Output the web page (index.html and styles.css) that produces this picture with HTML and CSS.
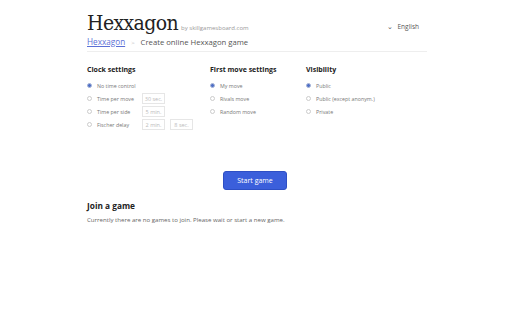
FILE: index.html
```html
<!DOCTYPE html>
<html lang="en">
<head>
    <meta charset="UTF-8">
    <title>Hexxagon</title>
    <link rel="stylesheet" href="styles.css">
</head>
<body>
    <div class="page">
        <div class="header">
            <div class="brand">
                <span class="logo">Hexxagon</span>
                <span class="by">by skillgamesboard.com</span>
            </div>
            <div class="lang"><span class="chev">&#8964;</span> English</div>
        </div>
        <div class="crumbs">
            <a href="#">Hexxagon</a>
            <span class="sep">&gt;</span>
            <span>Create online Hexxagon game</span>
        </div>

        <div class="settings">
            <div class="group clock">
                <h3>Clock settings</h3>
                <label class="opt"><span class="radio on"></span>No time control</label>
                <label class="opt"><span class="radio"></span><span class="lbl">Time per move</span><span class="box">30 sec.</span></label>
                <label class="opt"><span class="radio"></span><span class="lbl">Time per side</span><span class="box">5 min.</span></label>
                <label class="opt"><span class="radio"></span><span class="lbl">Fischer delay</span><span class="box">2 min.</span><span class="box">8 sec.</span></label>
            </div>
            <div class="group first">
                <h3>First move settings</h3>
                <label class="opt"><span class="radio on"></span>My move</label>
                <label class="opt"><span class="radio"></span>Rivals move</label>
                <label class="opt"><span class="radio"></span>Random move</label>
            </div>
            <div class="group">
                <h3>Visibility</h3>
                <label class="opt"><span class="radio on"></span>Public</label>
                <label class="opt"><span class="radio"></span>Public (except anonym.)</label>
                <label class="opt"><span class="radio"></span>Private</label>
            </div>
        </div>

        <div class="actions">
            <button class="start">Start game</button>
        </div>

        <h2>Join a game</h2>
        <p class="note">Currently there are no games to join. Please wait or start a new game.</p>
    </div>
</body>
</html>
```

FILE: styles.css
```css
body {
    margin: 0;
    background: #fff;
    font-family: 'Open Sans', sans-serif;
    color: #333;
}

.page {
    width: 340px;
    margin: 0 0 0 87px;
    padding-top: 11px;
}

.header {
    display: flex;
    justify-content: space-between;
    align-items: flex-end;
    height: 25px;
}

.brand {
    display: flex;
    align-items: baseline;
}

.logo {
    font-family: 'DejaVu Serif Condensed', 'DejaVu Serif', serif;
    font-stretch: condensed;
    font-size: 21px;
    line-height: 26px;
    color: #222;
    letter-spacing: -0.6px;
}

.by {
    font-size: 6px;
    color: #999;
    margin-left: 3px;
}

.lang {
    font-size: 6.5px;
    color: #555;
    margin-bottom: 5px;
    margin-right: 8px;
}

.chev {
    font-size: 7px;
    margin-right: 3px;
}

.crumbs {
    font-size: 7.7px;
    line-height: 12px;
    color: #555;
    padding: 0 0 2px;
    border-bottom: 1px solid #eee;
}

.crumbs a {
    color: #5b6fd6;
    font-size: 8.2px;
}

.sep {
    color: #bbb;
    font-size: 6px;
    margin: 0 4px;
}

.settings {
    display: flex;
    margin-top: 13px;
}

.group h3 {
    font-size: 7px;
    line-height: 10px;
    font-weight: 700;
    color: #222;
    margin: 0 0 4px;
}

.clock {
    width: 123px;
}

.first {
    width: 96px;
}

.opt {
    display: flex;
    align-items: center;
    height: 13px;
    font-size: 5.3px;
    color: #777;
}

.radio {
    width: 5px;
    height: 5px;
    border-radius: 50%;
    border: 1px solid #ccc;
    margin: 0 5px 0 0;
    box-sizing: border-box;
}

.radio.on {
    background: #4f6fc6;
    border: 1px solid #a8b6d8;
}

.lbl {
    width: 45px;
}

.box {
    width: 23px;
    height: 11px;
    border: 1px solid #e6e6e6;
    box-sizing: border-box;
    color: #bbb;
    font-size: 5.5px;
    display: flex;
    align-items: center;
    justify-content: center;
    margin-right: 5px;
}

.actions {
    display: flex;
    justify-content: center;
    margin-top: 40px;
    padding-right: 4px;
}

.start {
    width: 64px;
    height: 19px;
    background: #3b5fdb;
    color: #fff;
    border: 1px solid #2e4fc4;
    border-radius: 3px;
    font-family: 'Open Sans', sans-serif;
    font-size: 7px;
}

h2 {
    font-size: 8.3px;
    font-weight: 700;
    color: #222;
    margin: 10px 0 4px;
}

.note {
    font-size: 6.1px;
    color: #666;
    margin: 0;
}
```
